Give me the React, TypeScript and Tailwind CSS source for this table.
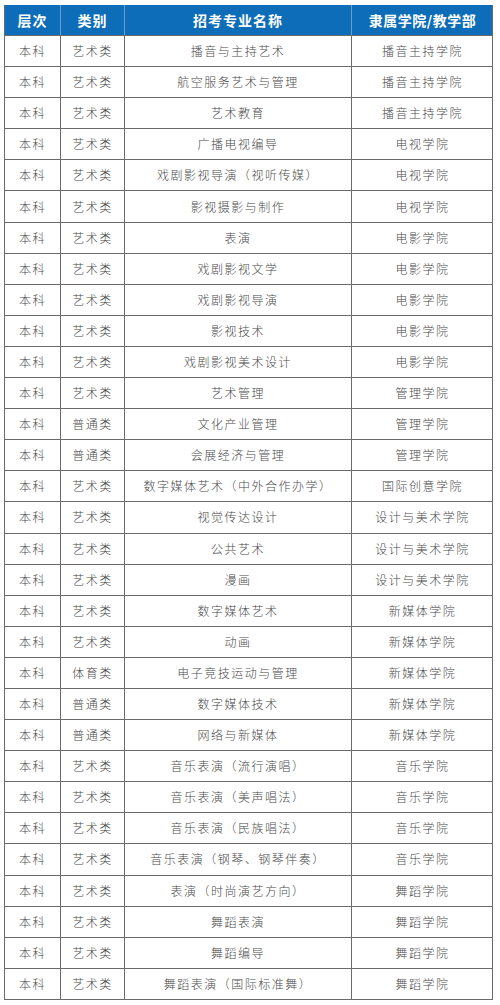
const rows: [string, string, string, string][] = [
  ["本科", "艺术类", "播音与主持艺术", "播音主持学院"],
  ["本科", "艺术类", "航空服务艺术与管理", "播音主持学院"],
  ["本科", "艺术类", "艺术教育", "播音主持学院"],
  ["本科", "艺术类", "广播电视编导", "电视学院"],
  ["本科", "艺术类", "戏剧影视导演（视听传媒）", "电视学院"],
  ["本科", "艺术类", "影视摄影与制作", "电视学院"],
  ["本科", "艺术类", "表演", "电影学院"],
  ["本科", "艺术类", "戏剧影视文学", "电影学院"],
  ["本科", "艺术类", "戏剧影视导演", "电影学院"],
  ["本科", "艺术类", "影视技术", "电影学院"],
  ["本科", "艺术类", "戏剧影视美术设计", "电影学院"],
  ["本科", "艺术类", "艺术管理", "管理学院"],
  ["本科", "普通类", "文化产业管理", "管理学院"],
  ["本科", "普通类", "会展经济与管理", "管理学院"],
  ["本科", "艺术类", "数字媒体艺术（中外合作办学）", "国际创意学院"],
  ["本科", "艺术类", "视觉传达设计", "设计与美术学院"],
  ["本科", "艺术类", "公共艺术", "设计与美术学院"],
  ["本科", "艺术类", "漫画", "设计与美术学院"],
  ["本科", "艺术类", "数字媒体艺术", "新媒体学院"],
  ["本科", "艺术类", "动画", "新媒体学院"],
  ["本科", "体育类", "电子竞技运动与管理", "新媒体学院"],
  ["本科", "普通类", "数字媒体技术", "新媒体学院"],
  ["本科", "普通类", "网络与新媒体", "新媒体学院"],
  ["本科", "艺术类", "音乐表演（流行演唱）", "音乐学院"],
  ["本科", "艺术类", "音乐表演（美声唱法）", "音乐学院"],
  ["本科", "艺术类", "音乐表演（民族唱法）", "音乐学院"],
  ["本科", "艺术类", "音乐表演（钢琴、钢琴伴奏）", "音乐学院"],
  ["本科", "艺术类", "表演（时尚演艺方向）", "舞蹈学院"],
  ["本科", "艺术类", "舞蹈表演", "舞蹈学院"],
  ["本科", "艺术类", "舞蹈编导", "舞蹈学院"],
  ["本科", "艺术类", "舞蹈表演（国际标准舞）", "舞蹈学院"],
];

const cols = "grid grid-cols-[56px_64px_227px_141px]";

export default function App() {
  return (
    <div className="min-h-[1005px] w-[500px] bg-white pl-[4px] pt-[5px] font-['Noto_Sans_CJK_SC','Noto_Sans',sans-serif]">
      <div className="w-[489px] border-x border-b border-[#6b6b6b]">
        <div className={`${cols} h-[30px] bg-[#0e6db8] text-[14px] font-bold text-white tracking-[1px]`}>
          <div className="flex items-center justify-center border-r border-[#6a9ccc]">层次</div>
          <div className="flex items-center justify-center border-r border-[#6a9ccc]">类别</div>
          <div className="flex items-center justify-center border-r border-[#6a9ccc]">招考专业名称</div>
          <div className="flex items-center justify-center tracking-[0.5px]">隶属学院/教学部</div>
        </div>
        {rows.map((r, i) => (
          <div
            key={i}
            className={`${cols} h-[31.1px] border-t border-[#6b6b6b] text-[12px] font-light text-[#4a4a4a] tracking-[1.5px]`}
          >
            <div className="flex items-center justify-center border-r border-[#6b6b6b]">{r[0]}</div>
            <div className="flex items-center justify-center border-r border-[#6b6b6b]">{r[1]}</div>
            <div className="flex items-center justify-center border-r border-[#6b6b6b]">{r[2]}</div>
            <div className="flex items-center justify-center">{r[3]}</div>
          </div>
        ))}
      </div>
    </div>
  );
}
